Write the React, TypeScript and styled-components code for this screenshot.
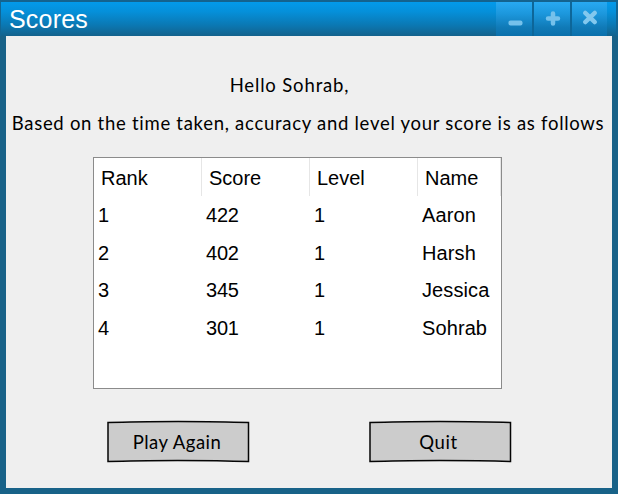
import React from 'react';
import styled, { createGlobalStyle } from 'styled-components';

const GlobalStyle = createGlobalStyle`
  * { box-sizing: border-box; }
  body { margin: 0; background: #fff; overflow: hidden; }
`;

const Window = styled.main`
  width: 618px;
  height: 494px;
  display: flex;
  flex-direction: column;
  background: #186288;
  border-top: 2px solid #14638f;
  font-family: 'Liberation Sans', sans-serif;
`;

const TitleBar = styled.header`
  height: 34px;
  flex: none;
  display: flex;
  justify-content: space-between;
  padding: 0 9px 0 8px;
  border-left: 1px solid #126694;
  border-right: 2px solid #126694;
  background: linear-gradient(#039aeb 0%, #0590da 28%, #0b78b3 68%, #13628c 100%);
`;

const Title = styled.h1`
  margin: 0;
  color: #fff;
  font-size: 25px;
  line-height: 35px;
  font-weight: 400;
  letter-spacing: 0.2px;
`;

const Controls = styled.div`
  display: flex;
  gap: 2px;
  background: #0d6699;
`;

const Control = styled.button<{ $width: number }>`
  width: ${(p) => p.$width}px;
  height: 34px;
  padding: 0;
  border: 0;
  background: linear-gradient(#28a9f2 0%, #1c97dc 35%, #107ab7 75%, #0b70ab 100%);
  svg { display: block; }
`;

const Content = styled.section`
  flex: none;
  width: 606px;
  height: 452px;
  margin-left: 6px;
  background: #efefef;
  display: flex;
  flex-direction: column;
  align-items: center;
`;

const Message = styled.p<{ $top: number; $spacing: number; $shift: number }>`
  margin: ${(p) => p.$top}px ${(p) => p.$shift}px 0 0;
  height: 26px;
  white-space: nowrap;
  color: #000;
  font: 400 18.5px/26px Lato, sans-serif;
  letter-spacing: ${(p) => p.$spacing}px;
`;

const ScoreTable = styled.div`
  width: 409px;
  height: 232px;
  margin: 21px 23px 0 0;
  border: 1px solid #8b8b8b;
  background: #fff;
  color: #000;
  font-size: 20px;
`;

const HeaderRow = styled.div`
  display: grid;
  grid-template-columns: 108px 108px 108px 83px;
  height: 38px;
`;

const HeaderCell = styled.div`
  height: 38px;
  padding-left: 7px;
  line-height: 41px;
  border-right: 1px solid #e6e6e6;
`;

const Row = styled.div`
  display: grid;
  grid-template-columns: 108px 108px 108px 83px;
  height: 37.6px;
`;

const Cell = styled.div<{ $name?: boolean }>`
  padding-left: 4px;
  line-height: 38px;
  letter-spacing: ${(p) => (p.$name ? 0.1 : -0.2)}px;
`;

const Actions = styled.footer`
  display: flex;
  gap: 118px;
  margin: 31px 0 0 0;
`;

const ActionButton = styled.button`
  display: grid;
  width: 144px;
  height: 43px;
  padding: 0;
  border: 0;
  background: transparent;
  place-items: center;
  > * { grid-area: 1 / 1; }
`;

const ActionLabel = styled.span<{ $spacing: number; $shift: number }>`
  padding-right: ${(p) => p.$shift}px;
  color: #000;
  font: 400 18.5px/26px Lato, sans-serif;
  letter-spacing: ${(p) => p.$spacing}px;
`;

const scores = [
  { score: 422, name: 'Aaron' },
  { score: 402, name: 'Harsh' },
  { score: 345, name: 'Jessica' },
  { score: 301, name: 'Sohrab' },
];

function SketchFrame() {
  return (
    <svg width="144" height="43" viewBox="0 0 144 43">
      <path d="M2 2.5C38 1 106 1 142.5 2.5V41.5C105 40 38 40 2 41.5Z" fill="#ccc" stroke="#050505" strokeWidth="1.5" />
    </svg>
  );
}

export default function App() {
  return (
    <>
      <GlobalStyle />
      <Window>
        <TitleBar>
          <Title>Scores</Title>
          <Controls>
            <Control $width={36} aria-label="Minimize">
              <svg width="36" height="34"><rect x="12.5" y="18.5" width="14" height="5" rx="2" fill="#75c1eb" /></svg>
            </Control>
            <Control $width={36} aria-label="Maximize">
              <svg width="36" height="34"><path d="M19 11.5v10M14 16.5h10" stroke="#75c1eb" strokeWidth="4.5" strokeLinecap="round" /></svg>
            </Control>
            <Control $width={35} aria-label="Close">
              <svg width="35" height="34"><path d="m13.2 10.9 9.6 9.2m0-9.2-9.6 9.2" stroke="#82c8ee" strokeWidth="4.4" strokeLinecap="round" /></svg>
            </Control>
          </Controls>
        </TitleBar>
        <Content>
          <Message $top={36} $spacing={0.85} $shift={39}>Hello Sohrab,</Message>
          <Message $top={12} $spacing={0.72} $shift={2}>
            Based on the time taken, accuracy and level your score is as follows
          </Message>
          <ScoreTable>
            <HeaderRow>
              {['Rank', 'Score', 'Level', 'Name'].map((label) => <HeaderCell key={label}>{label}</HeaderCell>)}
            </HeaderRow>
            {scores.map((entry, index) => (
              <Row key={entry.name}>
                <Cell>{index + 1}</Cell>
                <Cell>{entry.score}</Cell>
                <Cell>1</Cell>
                <Cell $name>{entry.name}</Cell>
              </Row>
            ))}
          </ScoreTable>
          <Actions>
            <ActionButton><SketchFrame /><ActionLabel $spacing={0.5} $shift={2}>Play Again</ActionLabel></ActionButton>
            <ActionButton><SketchFrame /><ActionLabel $spacing={0.6} $shift={3}>Quit</ActionLabel></ActionButton>
          </Actions>
        </Content>
      </Window>
    </>
  );
}
